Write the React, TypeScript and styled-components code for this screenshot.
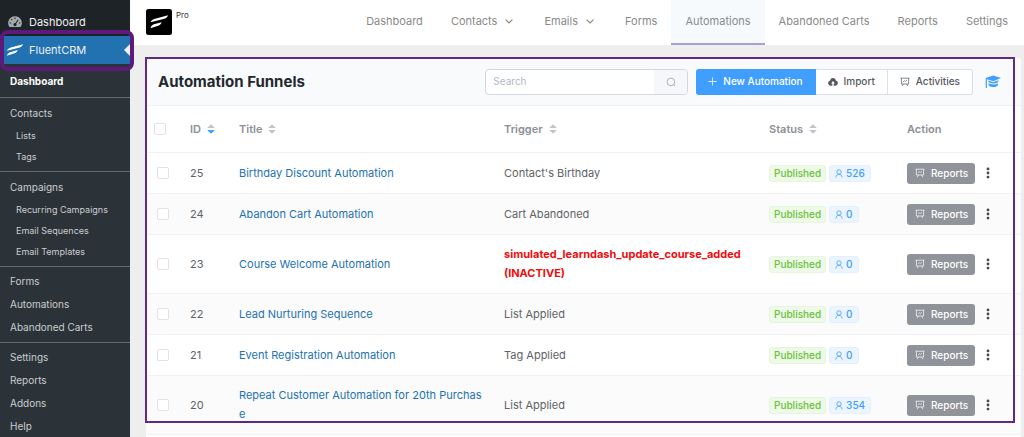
import React from "react";
import styled, { createGlobalStyle, css } from "styled-components";

const Global = createGlobalStyle`
  *, *::before, *::after { box-sizing: border-box; }
  body {
    margin: 0;
    background: #eeeeee;
    color: #606266;
    font: 400 11px/19px Inter, "Liberation Sans", sans-serif;
  }
  a { color: inherit; text-decoration: none; }
  ul { list-style: none; margin: 0; padding: 0; }
  button, input { font: inherit; }
  svg { display: block; flex: none; }
`;

const Shell = styled.div`
  display: grid;
  grid-template-columns: 130px minmax(0, 1fr);
  grid-template-rows: 100%;
  height: 100vh;
  overflow: hidden;
`;

/* ---------- admin sidebar ---------- */

const Sidebar = styled.nav`
  background: #2c3338;
  color: #c9cdd1;
`;

const AdminLinks = styled.div`
  background: #1d2327;
  padding-top: 8px;
`;

const AdminLink = styled.a<{ $active?: boolean }>`
  display: flex;
  align-items: center;
  gap: 6px;
  height: 28px;
  padding: 0 0 0 7px;
  color: #f0f0f1;
  position: relative;
  ${(p) =>
    p.$active &&
    css`
      background: #2271b1;
      &::after {
        content: "";
        margin-left: auto;
        border: 6px solid transparent;
        border-left: 0;
        border-right-color: #f0f0f1;
      }
    `}
`;

const Highlight = styled.span`
  position: absolute;
  inset: -6px -4px -7px 0;
  border: 4px solid #5b1a7c;
  border-radius: 8px;
  z-index: 2;
`;

const MenuGroup = styled.ul<{ $nested?: boolean }>`
  padding: ${(p) => (p.$nested ? 4 : 3)}px 0;
  & + & { border-top: 1px solid #666b70; }
`;

const MenuItem = styled.li<{ $sub?: boolean; $current?: boolean }>`
  padding-left: ${(p) => (p.$sub ? 16 : 10)}px;
  font-size: ${(p) => (p.$sub ? 9 : 10)}px;
  line-height: ${(p) => (p.$sub ? 21 : 23)}px;
  white-space: nowrap;
  ${(p) => p.$current && css`color: #fff; font-weight: 700;`}
`;

const CurrentGroup = styled(MenuGroup)`
  padding: 6px 0 4px;
`;

/* ---------- top bar ---------- */

const Main = styled.div`
  display: flex;
  flex-direction: column;
  min-width: 0;
`;

const TopBar = styled.header`
  display: flex;
  flex: none;
  height: 45px;
  padding: 0 2px 0 16px;
  background: #fff;
`;

const Brand = styled.div`
  display: flex;
  align-items: flex-start;
  gap: 4px;
  padding-top: 9px;
  font-size: 8px;
  line-height: 13px;
  color: #333;
`;

const TopNav = styled.nav`
  display: flex;
  margin-left: auto;
`;

const TopLink = styled.a<{ $active?: boolean }>`
  display: flex;
  align-items: center;
  gap: 8px;
  padding: 0 14px;
  color: #8a8a8a;
  border-bottom: 2px solid transparent;
  white-space: nowrap;
  ${(p) => p.$active && css`background: #f7fafc; border-color: #a79fd6;`}
`;

/* ---------- card ---------- */

const Card = styled.main`
  position: relative;
  flex: 1;
  min-height: 0;
  display: flex;
  flex-direction: column;
  margin: 13px 3px 0 16px;
  background: #fff;
`;

const Frame = styled.span`
  position: absolute;
  inset: -1px 6px 14px -1px;
  border: 2px solid #5f2a80;
  pointer-events: none;
`;

const Toolbar = styled.div`
  display: flex;
  align-items: center;
  flex: none;
  height: 48px;
  padding: 0 20px 0 12px;
  background: #f8fafc;
  border-bottom: 1px solid #eff1f4;
`;

const Heading = styled.h1`
  margin: 0 auto 0 0;
  font-size: 15px;
  line-height: 24px;
  font-weight: 700;
  color: #23282d;
`;

const SearchBox = styled.form`
  display: flex;
  width: 203px;
  height: 26px;
  margin-right: 8px;
  border: 1px solid #d3d6dc;
  border-radius: 4px;
  overflow: hidden;
  background: #fff;
`;

const SearchInput = styled.input`
  flex: 1;
  min-width: 0;
  border: 0;
  outline: 0;
  padding: 0 7px;
  font-size: 10px;
  background: transparent;
  &::placeholder { color: #b4b8be; opacity: 1; }
`;

const SearchButton = styled.button`
  display: grid;
  place-items: center;
  width: 33px;
  padding: 0;
  border: 0;
  background: #f5f7fa;
  color: #a4a8b0;
`;

const ButtonGroup = styled.div`
  display: flex;
  margin-right: 12px;
`;

const ToolButton = styled.button<{ $primary?: boolean }>`
  display: flex;
  align-items: center;
  gap: 6px;
  height: 26px;
  padding: 0 12px;
  font-size: 10px;
  font-weight: 500;
  white-space: nowrap;
  color: #55585e;
  background: #fff;
  border: 1px solid #dcdfe6;
  border-left-width: 0;
  &:first-child { border-radius: 3px 0 0 3px; }
  &:last-child { border-radius: 0 3px 3px 0; }
  ${(p) => p.$primary && css`color: #fff; background: #409eff; border-color: #409eff;`}
`;

const IconLink = styled.a`
  color: #409eff;
`;

/* ---------- table ---------- */

const Table = styled.table`
  width: 100%;
  table-layout: fixed;
  border-collapse: separate;
  border-spacing: 0;
`;

const Col = styled.col<{ $w?: number }>`
  ${(p) => p.$w && css`width: ${p.$w}px;`}
`;

const HeadCell = styled.th`
  height: 47px;
  padding: 0 8px;
  text-align: left;
  font-weight: 600;
  color: #8d9095;
  border-bottom: 1px solid #f0f1f4;
`;

const Sortable = styled.span`
  display: flex;
  align-items: center;
  gap: 6px;
`;

const Row = styled.tr`
  &:nth-child(even) { background: #fbfbfb; }
`;

const Cell = styled.td`
  height: 41px;
  padding: 0 8px;
  border-bottom: 1px solid #f0f1f4;
`;

const TextCell = styled(Cell)<{ $warn?: boolean }>`
  padding: 10px 12px 10px 8px;
  ${(p) => p.$warn && css`color: #f00c0c; font-weight: 700;`}
`;

const TitleLink = styled.a`
  color: #2271b1;
  word-break: break-all;
`;

const Check = styled.input.attrs({ type: "checkbox" })<{ $inset?: boolean }>`
  appearance: none;
  display: block;
  width: 12px;
  height: 12px;
  margin: 0 0 0 ${(p) => (p.$inset ? 3 : 0)}px;
  border: 1px solid #e0e2e8;
  border-radius: 2px;
  background: #fff;
`;

const Inline = styled.div`
  display: flex;
  align-items: center;
  gap: 3px;
`;

const Tag = styled.span<{ $blue?: boolean }>`
  display: flex;
  align-items: center;
  gap: 3px;
  height: 17px;
  padding: 0 ${(p) => (p.$blue ? 5 : 4)}px;
  border: 1px solid ${(p) => (p.$blue ? "#e2f0ff" : "#e6f6de")};
  border-radius: 3px;
  background: ${(p) => (p.$blue ? "#ecf5ff" : "#eef9e8")};
  color: ${(p) => (p.$blue ? "#409eff" : "#67c23a")};
  font-size: 10px;
  font-weight: 500;
`;

const Actions = styled.div`
  display: flex;
  align-items: center;
  gap: 11px;
`;

const ReportButton = styled.button`
  display: flex;
  align-items: center;
  gap: 6px;
  height: 21px;
  padding: 0 7px 0 8px;
  border: 0;
  border-radius: 3px;
  background: #909399;
  color: #fff;
  font-size: 10px;
  font-weight: 500;
`;

const MoreButton = styled.button`
  padding: 0;
  border: 0;
  background: none;
  color: #45484d;
`;

/* ---------- icons ---------- */

const Gauge = () => (
  <svg width="16" height="12" viewBox="-1 0 16 12">
    <path fill="#a7aaad" d="M7 .3a6.700 6.700 0 0 0-5.500 10.700h11A6.700 6.700 0 0 0 7 .3z" />
    <path stroke="#1d2327" strokeWidth="1.100" fill="none" d="M7 1.500v1.500M3.300 3.200l1 1M1.600 7h1.500M10.900 7h1.500M7 8.500l3.200-4.800" />
    <path fill="#1d2327" d="M5.400 8.600a1.600 1.600 0 0 1 3.200 0c0 1-.7 1.500-1.600 1.500s-1.600-.5-1.600-1.500z" />
  </svg>
);

const Bars = ({ w, h }: { w: number; h: number }) => (
  <svg width={w} height={h} viewBox="0 0 17 12">
    <path fill="#fff" d="M0 6.8C1 4.6 2.500 3.900 5 3.200L17 0c-.8 2.200-2 3-4.500 3.700z" />
    <path fill="#fff" d="M0 12c.6-2.300 1.800-3.300 4.400-4L11.500 6c-.8 2.200-2 3-4.300 3.700z" />
  </svg>
);

const BrandLogo = () => (
  <svg width="26" height="26" viewBox="0 0 26 26">
    <rect width="26" height="26" rx="2.500" fill="#000" />
    <path fill="#fff" d="M4.500 13.300c.9-2.200 2.200-2.900 4.600-3.600L22 6.200c-.8 2.300-2.200 3.100-4.500 3.800z" />
    <path fill="#fff" d="M4.500 19.300c.6-2.500 1.900-3.500 4.400-4.200l6.700-1.900c-.7 2.200-2 3.100-4.300 3.800z" />
  </svg>
);

const Chevron = () => (
  <svg width="11" height="5" viewBox="0 0 11 5" fill="none" stroke="currentColor" strokeWidth="1.200">
    <path d="M.6.6 4 4 7.400.6" />
  </svg>
);

const SearchIcon = () => (
  <svg width="10" height="10" viewBox="0 0 10 10" fill="none" stroke="currentColor" strokeWidth=".9">
    <circle cx="4.900" cy="4.900" r="3.800" />
    <path d="M7.500 7.500 9 9" />
  </svg>
);

const PlusIcon = () => (
  <svg width="9" height="9" viewBox="0 0 9 9" stroke="currentColor" strokeWidth=".8">
    <path d="M4.500.5v8M.5 4.500h8" />
  </svg>
);

const CloudUp = () => (
  <svg width="10" height="8" viewBox="0 0 10 8">
    <path fill="currentColor" d="M5 0a3 3 0 0 0-2.900 2.400A2.700 2.700 0 0 0 2.700 7.700h1.600V5.500H3L5 3l2 2.500H5.700v2.200h1.600a2.700 2.700 0 0 0 .6-5.300A3 3 0 0 0 5 0z" />
  </svg>
);

const Board = () => (
  <svg width="10" height="10" viewBox="0 0 10 10" fill="none" stroke="currentColor" strokeWidth=".7">
    <path d="M.6 1.200h8.800M1.400 1.200v5.800h7.200V1.200M3.200 7 2.300 9.200M6.800 7l.9 2.200M3.200 4.900l1.200-1.200 1 .9 1.500-1.500" />
  </svg>
);

const UserIcon = () => (
  <svg width="8" height="9" viewBox="0 0 8 9" fill="none" stroke="currentColor" strokeWidth=".8">
    <circle cx="4" cy="3" r="2.200" />
    <path d="M.8 8.600C1 6.500 2.200 5.300 4 5.300s3 1.200 3.200 3.300" />
  </svg>
);

const Cap = () => (
  <svg width="16" height="14" viewBox="0 0 16 14" fill="currentColor">
    <path d="M8.300.4 16 3.100 8.300 6.300 1.900 4.200v8.900H.7V3.100z" />
    <path d="M3.300 5.400 8.300 7.200l5-1.900v1.400c-1.300 1.300-3 1.800-5 1.800s-3.800-.5-5-1.700z" />
    <path d="M3.600 8.100c1.300 1 2.900 1.400 4.700 1.400s3.400-.4 4.600-1.300v2c-1.100 1.300-2.700 1.900-4.600 1.900s-3.600-.6-4.700-1.900z" />
  </svg>
);

const Dots = () => (
  <svg width="4" height="12" viewBox="0 0 4 12" fill="currentColor">
    <circle cx="2" cy="1.900" r="1.400" />
    <circle cx="2" cy="6" r="1.400" />
    <circle cx="2" cy="10.100" r="1.400" />
  </svg>
);

const Sorter = ({ down }: { down?: boolean }) => (
  <svg width="8" height="10" viewBox="0 0 8 10">
    <path fill="#c0c4cc" d="M4 .3 7.800 4H.2z" />
    <path fill={down ? "#409eff" : "#c0c4cc"} d="M4 9.700.2 6h7.600z" />
  </svg>
);

/* ---------- data ---------- */

type MenuEntry = { label: string; sub?: boolean };

const menu: { nested?: boolean; items: MenuEntry[] }[] = [
  { nested: true, items: [{ label: "Contacts" }, { label: "Lists", sub: true }, { label: "Tags", sub: true }] },
  {
    nested: true,
    items: [
      { label: "Campaigns" },
      { label: "Recurring Campaigns", sub: true },
      { label: "Email Sequences", sub: true },
      { label: "Email Templates", sub: true },
    ],
  },
  { items: [{ label: "Forms" }, { label: "Automations" }, { label: "Abandoned Carts" }] },
  { items: [{ label: "Settings" }, { label: "Reports" }, { label: "Addons" }, { label: "Help" }] },
];

const topLinks = [
  { label: "Dashboard" },
  { label: "Contacts", more: true },
  { label: "Emails", more: true },
  { label: "Forms" },
  { label: "Automations", active: true },
  { label: "Abandoned Carts" },
  { label: "Reports" },
  { label: "Settings" },
];

const funnels = [
  { id: 25, title: "Birthday Discount Automation", trigger: "Contact's Birthday", count: 526 },
  { id: 24, title: "Abandon Cart Automation", trigger: "Cart Abandoned", count: 0 },
  { id: 23, title: "Course Welcome Automation", trigger: "simulated_learndash_update_course_added (INACTIVE)", count: 0, warn: true },
  { id: 22, title: "Lead Nurturing Sequence", trigger: "List Applied", count: 0 },
  { id: 21, title: "Event Registration Automation", trigger: "Tag Applied", count: 0 },
  { id: 20, title: "Repeat Customer Automation for 20th Purchase", trigger: "List Applied", count: 354 },
];

export default function App() {
  return (
    <Shell>
      <Global />
      <Sidebar>
        <AdminLinks>
          <AdminLink href="#"><Gauge />Dashboard</AdminLink>
          <AdminLink href="#" $active><Bars w={16} h={12} />FluentCRM<Highlight /></AdminLink>
        </AdminLinks>
        <CurrentGroup>
          <MenuItem $current><a href="#">Dashboard</a></MenuItem>
        </CurrentGroup>
        {menu.map((group) => (
          <MenuGroup key={group.items[0].label} $nested={group.nested}>
            {group.items.map((item) => (
              <MenuItem key={item.label} $sub={item.sub}><a href="#">{item.label}</a></MenuItem>
            ))}
          </MenuGroup>
        ))}
      </Sidebar>
      <Main>
        <TopBar>
          <Brand><BrandLogo />Pro</Brand>
          <TopNav>
            {topLinks.map((l) => (
              <TopLink key={l.label} href="#" $active={l.active}>{l.label}{l.more && <Chevron />}</TopLink>
            ))}
          </TopNav>
        </TopBar>
        <Card>
          <Toolbar>
            <Heading>Automation Funnels</Heading>
            <SearchBox>
              <SearchInput type="text" placeholder="Search" aria-label="Search" />
              <SearchButton type="button" aria-label="Run search"><SearchIcon /></SearchButton>
            </SearchBox>
            <ButtonGroup>
              <ToolButton $primary><PlusIcon />New Automation</ToolButton>
              <ToolButton><CloudUp />Import</ToolButton>
              <ToolButton><Board />Activities</ToolButton>
            </ButtonGroup>
            <IconLink href="#" aria-label="Tutorials"><Cap /></IconLink>
          </Toolbar>
          <Table>
            <colgroup>
              <Col $w={36} /><Col $w={49} /><Col /><Col /><Col $w={138} /><Col $w={122} />
            </colgroup>
            <thead>
              <tr>
                <HeadCell><Check aria-label="Select all" /></HeadCell>
                <HeadCell><Sortable>ID<Sorter down /></Sortable></HeadCell>
                <HeadCell><Sortable>Title<Sorter /></Sortable></HeadCell>
                <HeadCell><Sortable>Trigger<Sorter /></Sortable></HeadCell>
                <HeadCell><Sortable>Status<Sorter /></Sortable></HeadCell>
                <HeadCell>Action</HeadCell>
              </tr>
            </thead>
            <tbody>
              {funnels.map((f) => (
                <Row key={f.id}>
                  <Cell><Check $inset aria-label={`Select ${f.title}`} /></Cell>
                  <Cell>{f.id}</Cell>
                  <TextCell><TitleLink href="#">{f.title}</TitleLink></TextCell>
                  <TextCell $warn={f.warn}>{f.trigger}</TextCell>
                  <Cell>
                    <Inline><Tag>Published</Tag><Tag $blue><UserIcon />{f.count}</Tag></Inline>
                  </Cell>
                  <Cell>
                    <Actions>
                      <ReportButton><Board />Reports</ReportButton>
                      <MoreButton aria-label="More actions"><Dots /></MoreButton>
                    </Actions>
                  </Cell>
                </Row>
              ))}
            </tbody>
          </Table>
          <Frame />
        </Card>
      </Main>
    </Shell>
  );
}
